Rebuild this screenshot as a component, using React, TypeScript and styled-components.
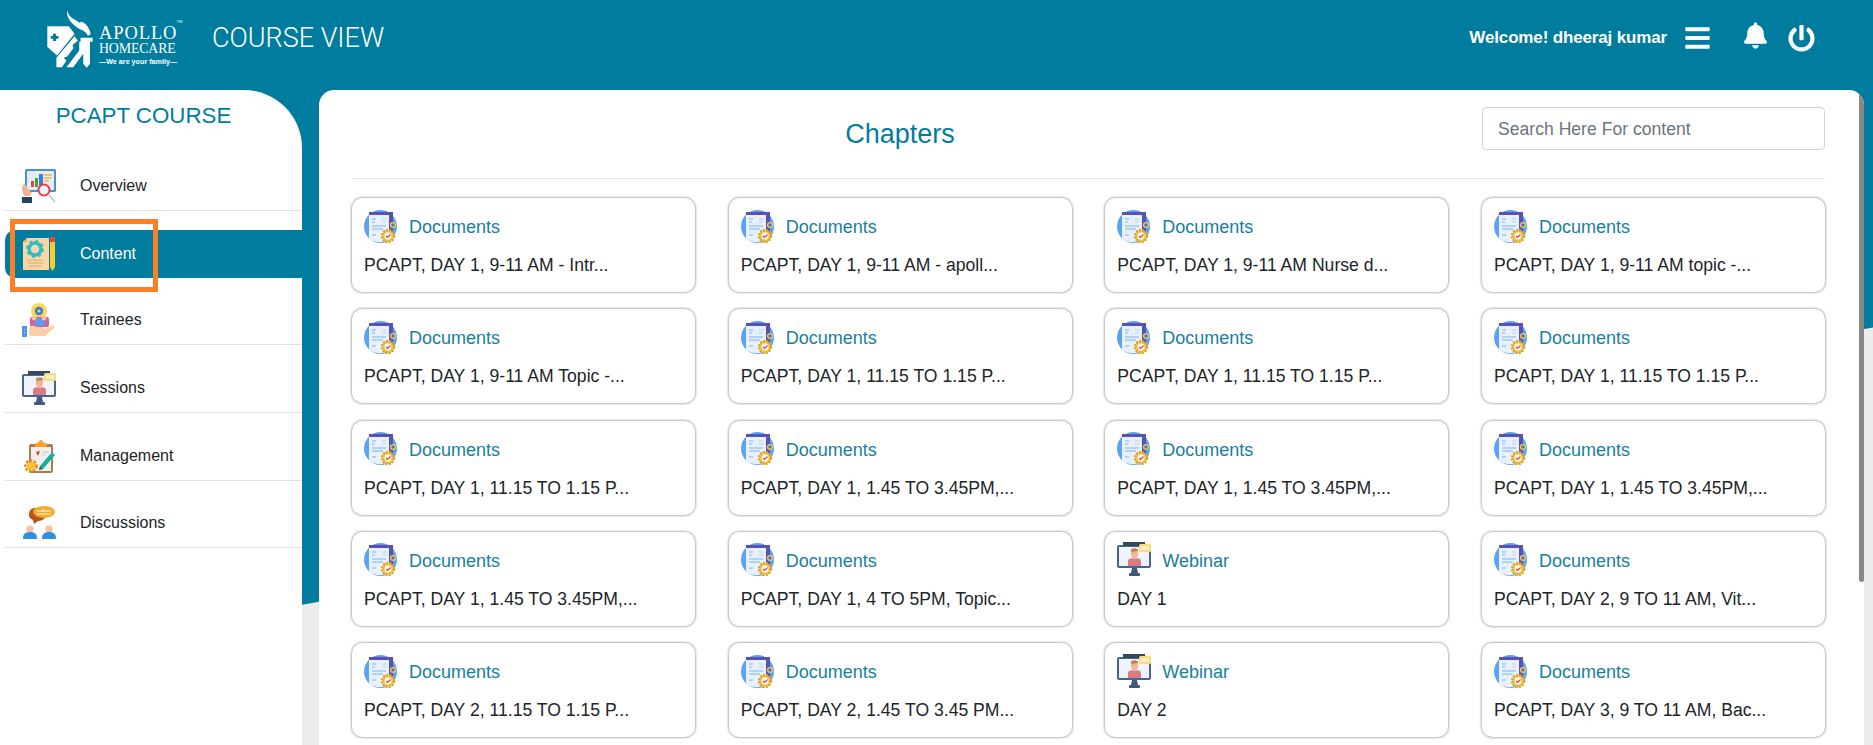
import styled, { createGlobalStyle } from "styled-components";
import { FaBars, FaBell, FaPowerOff } from "react-icons/fa";

const TEAL = "#007c9e";

const GlobalStyle = createGlobalStyle`
  html, body {
    margin: 0;
    height: 100%;
  }
  * {
    box-sizing: border-box;
  }
  body {
    font-family: "Liberation Sans", Arial, sans-serif;
    color: #212529;
  }
`;

const Page = styled.div`
  position: relative;
  height: 100vh;
  overflow: hidden;
  background: #ececec;
  display: flex;
  flex-direction: column;

  &::before {
    content: "";
    position: absolute;
    inset: 0;
    background: ${TEAL};
    clip-path: polygon(0 0, 100% 0, 100% 327.5px, 0 658px);
  }
`;

const TopBar = styled.header`
  position: relative;
  flex: none;
  height: 90px;
  display: flex;
  align-items: center;
  color: #fff;
  padding: 0 58px 0 47px;
`;

const Logo = styled.div`
  display: flex;
  align-items: flex-start;
  gap: 5px;
  width: 165px;
  margin-top: -12px;
`;

const LogoWords = styled.div`
  position: relative;
  display: flex;
  flex-direction: column;
  align-items: flex-start;
  padding-top: 15px;
  font-family: "Liberation Serif", serif;
  white-space: nowrap;
`;

const LogoName = styled.span`
  font-size: 18.5px;
  line-height: 17px;
  letter-spacing: 0.9px;
`;

const LogoSub = styled.span`
  font-size: 13.8px;
  line-height: 14px;
  letter-spacing: -0.1px;
`;

const LogoTag = styled.span`
  font-family: "Liberation Sans", sans-serif;
  font-size: 7.2px;
  line-height: 11px;
  font-weight: 700;
`;

const LogoTm = styled.span`
  position: absolute;
  top: 9px;
  right: -5px;
  font-family: "Liberation Sans", sans-serif;
  font-size: 4px;
`;

const PageTitle = styled.div`
  font-family: Roboto, sans-serif;
  font-weight: 300;
  font-size: 27px;
  margin-top: -14px;
`;

const UserArea = styled.div`
  margin-left: auto;
  display: flex;
  align-items: center;
  margin-top: -14px;
`;

const Welcome = styled.span`
  font-size: 17px;
  font-weight: 700;
  letter-spacing: -0.15px;
  margin-right: 18px;
`;

const BarIcon = styled(FaBars)`
  font-size: 25px;
  width: 25px;
  height: 28px;
  margin-right: 34px;
`;

const BellIcon = styled(FaBell)`
  width: 23px;
  height: 27px;
  margin: -6px 21px 0 0;
`;

const PowerIcon = styled(FaPowerOff)`
  width: 27px;
  height: 27px;
  margin-top: 1px;
`;

const Body = styled.div`
  position: relative;
  flex: 1;
  min-height: 0;
  display: flex;
`;

const Sidebar = styled.aside`
  flex: none;
  width: 302px;
  background: #fff;
  border-top-right-radius: 58px;
`;

const CourseName = styled.div`
  color: ${TEAL};
  font-size: 22.3px;
  line-height: 25px;
  text-align: center;
  padding: 13px 15px 0 0;
  height: 53px;
`;

const NavItem = styled.div<{ $active?: boolean }>`
  height: ${(p) => (p.$active ? "48px" : "67.7px")};
  margin: ${(p) => (p.$active ? "19px" : "0")} 0 0 5px;
  padding: 0 0 6px 17px;
  display: flex;
  align-items: flex-end;
  gap: 24px;
  font-size: 16px;
  background: ${(p) => (p.$active ? TEAL : "transparent")};
  color: ${(p) => (p.$active ? "#fff" : "#212529")};
  border-radius: ${(p) => (p.$active ? "10px 0 0 10px" : "0")};
  border-bottom: ${(p) => (p.$active ? "0" : "1px solid #e3dde2")};
`;

const NavLabel = styled.span`
  line-height: 33px;
  padding-bottom: 2px;
`;

const Highlight = styled.div`
  position: absolute;
  left: 10px;
  top: 129px;
  width: 148px;
  height: 73px;
  border: 5px solid #ff7f27;
`;

const Main = styled.main`
  position: relative;
  flex: none;
  width: 1545px;
  margin-left: 17px;
  background: #fff;
  border-radius: 15px 15px 0 0;
  overflow: hidden;
  padding: 17px 39px 0 33px;
`;

const ScrollThumb = styled.div`
  position: absolute;
  top: 0;
  right: 0;
  width: 5px;
  height: 492px;
  background: #888;
  border-radius: 0 0 3px 3px;
`;

const TitleRow = styled.div`
  display: grid;
  grid-template-columns: 1fr 343px;
  gap: 32px;
  align-items: center;
  padding-bottom: 28px;
  border-bottom: 1px solid #e4e4e4;
`;

const Chapters = styled.h2`
  margin: 0 2px 0 0;
  color: ${TEAL};
  font-size: 27px;
  font-weight: 400;
  text-align: center;
  padding-top: 12px;
`;

const SearchInput = styled.input`
  width: 100%;
  height: 43px;
  padding: 1px 15px 0;
  border: 1px solid #ced4da;
  border-radius: 4px;
  font-family: inherit;
  font-size: 17.6px;
  outline: none;

  &::placeholder {
    color: #6c757d;
    opacity: 1;
  }
`;

const CardGrid = styled.div`
  display: grid;
  grid-template-columns: repeat(4, 343px);
  justify-content: space-between;
  row-gap: 17.3px;
  margin-top: 19px;
`;

const Card = styled.div`
  height: 94px;
  padding: 11px 12px;
  background: #fff;
  border-radius: 10px;
  box-shadow: 0 0 3px rgba(0, 0, 0, 0.6);
`;

const CardHead = styled.div`
  display: flex;
  align-items: center;
  gap: 11px;
  height: 34px;
`;

const CardKind = styled.span`
  color: #18809f;
  font-size: 18px;
  padding-top: 3px;
`;

const CardName = styled.div`
  margin-top: 12px;
  font-size: 17.6px;
  line-height: 20px;
  white-space: nowrap;
`;

const Pic = styled.svg`
  flex: none;
  width: 34px;
  height: 35px;
  display: block;
`;

const LogoMark = () => (
  <svg width="47" height="58" viewBox="140 30 140 172" fill="#fff">
    <path d="M141 78H205L222 100L170 165L141 140Z" />
    <path fill={TEAL} d="M158 100h9v7h7v8h-7v7h-9v-7h-7v-8h7z" />
    <path d="M168 200V172L222 108L232 121L216 134L219 143L200 168L190 172L198 181L184 200Z" />
    <path d="M198 200L236 150V124H240V112H276V124H268V190L258 202L248 190V160L218 200Z" />
    <path d="M200 30C205 55 228 58 240 70C232 56 266 68 270 102L262 106C254 88 232 88 218 72C206 60 198 48 200 30Z" />
  </svg>
);

const OverviewPic = () => (
  <Pic viewBox="0 0 34 35">
    <rect x="3" y="0" width="31" height="23" rx="1.5" fill="#4f8fd0" />
    <rect x="5" y="2" width="27" height="19" fill="#e3eefb" />
    <rect x="9" y="12" width="3" height="6" fill="#ef4136" />
    <rect x="13" y="9" width="3" height="9" fill="#43a047" />
    <rect x="17" y="5" width="4" height="13" fill="#3c7fd0" />
    <path d="M22 6h8M22 9h8M22 12h5" stroke="#f4b63f" strokeWidth="1.3" />
    <path d="M0 20c0-4 2-5 3-5l3 5 4 4-2 3H2z" fill="#f5b28f" />
    <rect x="0" y="28" width="10" height="6" fill="#24425f" />
    <circle cx="22" cy="21" r="5.5" fill="#f3f7fb" stroke="#ee3e3e" strokeWidth="2" />
    <path d="M27 26l6 7" stroke="#a9c9e8" strokeWidth="1.6" />
  </Pic>
);

const ContentPic = () => (
  <Pic viewBox="0 0 34 35">
    <path d="M5 1h22v32H1V5z" fill="#f8d7a4" />
    <path d="M5 1v4H1z" fill="#e7b06c" />
    <circle cx="13" cy="12" r="6" fill="none" stroke="#2ebcc6" strokeWidth="3.4" />
    <circle cx="13" cy="12" r="8" fill="none" stroke="#2ebcc6" strokeWidth="2" strokeDasharray="3 3.3" />
    <path d="M5 23h16M6 26h15M7 29h13" stroke="#d9a873" strokeWidth="1" />
    <rect x="28" y="0" width="5" height="5" fill="#f0433e" />
    <path d="M28 5h5v25l-2.5 4-2.5-4z" fill="#f8cc2e" />
  </Pic>
);

const TraineesPic = () => (
  <Pic viewBox="0 0 34 35">
    <circle cx="17" cy="8" r="8" fill="#f7dc52" />
    <circle cx="17" cy="8" r="4.2" fill="#3d7bd8" />
    <circle cx="17" cy="8" r="1.5" fill="#f7dc52" />
    <rect x="8" y="14" width="19" height="10" rx="2" fill="#d75f96" />
    <rect x="13" y="15" width="10" height="8" rx="2" fill="#5b9bf0" />
    <circle cx="12" cy="15" r="2.4" fill="#f7c29b" />
    <circle cx="22" cy="15" r="2.4" fill="#f7c29b" />
    <path d="M7 24c3-2 5-1 8 0h6l1 2 7-3c2-1 4 0 4 1L23 33H10l-3-1z" fill="#fbd0a7" />
    <rect x="0" y="23" width="5" height="11" fill="#4d94ef" />
    <path d="M2.5 26v1M2.5 29v1" stroke="#f7dc52" />
  </Pic>
);

const SessionPic = () => (
  <Pic viewBox="0 0 34 35">
    <rect x="0" y="3" width="34" height="23" rx="2" fill="#47658a" />
    <rect x="6" y="0" width="22" height="4" fill="#33475f" />
    <rect x="2" y="5" width="30" height="19" fill="#eef3fc" />
    <path d="M11 24v-5c0-2 2-3 6.5-3s6.5 1 6.5 3v5z" fill="#d77b85" />
    <rect x="15" y="12" width="5" height="5" fill="#eeb596" />
    <path d="M14 8c0-2 7-2 7 0v5c0 2-7 2-7 0z" fill="#eeb596" />
    <path d="M14 10V8c0-2 7-2 7 0v1z" fill="#c48350" />
    <rect x="22" y="2" width="12" height="8" rx="1.5" fill="#f8dc7d" />
    <path d="M24 5h8M24 7h8" stroke="#fff" />
    <path d="M15 26h5l1 5h-7z" fill="#3f5a7d" />
    <rect x="12" y="31" width="11" height="3" rx="1" fill="#3f5a7d" />
  </Pic>
);

const ManagementPic = () => (
  <Pic viewBox="0 0 34 35">
    <rect x="7" y="5" width="24" height="29" rx="2" fill="#ad7a52" />
    <rect x="9" y="8" width="20" height="24" fill="#f2f0ee" />
    <path d="M13 5c0-1 3-1 4-2 1-3 3-3 4 0 1 1 4 1 4 2v3H13z" fill="#ffa126" />
    <path d="M14 13l4-1-2 5z" fill="#e2372f" />
    <path d="M21 13h6M20 16h3" stroke="#c3c3c3" />
    <path d="M18 27L30 13l3 3-12 14-4 1z" fill="#17b1a0" />
    <path d="M17 31l1-4 3 3z" fill="#555" />
    <circle cx="9" cy="27" r="4" fill="#f8c235" />
    <circle cx="9" cy="27" r="5.5" fill="none" stroke="#f2861d" strokeWidth="2.6" strokeDasharray="2.5 1.5" />
  </Pic>
);

const DiscussionPic = () => (
  <Pic viewBox="0 0 34 35">
    <path d="M13 2C8 2 7 6 7 9c0 3 2 4 4 5l1 4 4-3c6 0 8-4 8-7s-4-6-11-6z" fill="#b4521f" />
    <ellipse cx="22" cy="6" rx="11" ry="6" fill="#f9a826" />
    <path d="M15 5h14M15 8h14M21 2.5v3" stroke="#fff" strokeWidth="1" />
    <circle cx="8" cy="23" r="3.6" fill="#f9c0a5" />
    <circle cx="27" cy="23" r="3.6" fill="#f9c0a5" />
    <path d="M1 33c0-5 2-7 7-7s7 2 7 7z" fill="#2f8fe0" />
    <path d="M20 33c0-5 2-7 7-7s7 2 7 7z" fill="#2f8fe0" />
  </Pic>
);

const DocumentPic = () => (
  <Pic viewBox="0 0 34 35">
    <circle cx="16.5" cy="17.5" r="16.5" fill="#5aa3f4" />
    <path d="M5 3h24v24H5z" fill="#5b51b5" />
    <path d="M5 6h20v25c-6 3-14 3-20-1z" fill="#e7f1fd" />
    <path d="M8 10h4M8 13h3M8 17h14M8 20h11M8 26h4" stroke="#7fb2ea" strokeWidth="1.1" />
    <path d="M18 10h4M18 13h4" stroke="#b6d4f3" strokeWidth="1.1" />
    <circle cx="29" cy="16" r="2.4" fill="#4f6fd0" stroke="#f5d23d" strokeWidth="1.3" />
    <circle cx="24" cy="27" r="6" fill="#f2c744" stroke="#d9a429" strokeWidth="2.4" strokeDasharray="2 1.2" />
    <circle cx="24" cy="27" r="3.4" fill="#fff" />
    <path d="M22 27l1.5 1.5 3-3" fill="none" stroke="#e23b3b" strokeWidth="1.2" />
  </Pic>
);

interface INavEntry {
  label: string;
  pic: React.ReactNode;
  active?: boolean;
}

const navEntries: INavEntry[] = [
  { label: "Overview", pic: <OverviewPic /> },
  { label: "Content", pic: <ContentPic />, active: true },
  { label: "Trainees", pic: <TraineesPic /> },
  { label: "Sessions", pic: <SessionPic /> },
  { label: "Management", pic: <ManagementPic /> },
  { label: "Discussions", pic: <DiscussionPic /> },
];

const chapters: string[] = [
  "PCAPT, DAY 1, 9-11 AM - Intr...",
  "PCAPT, DAY 1, 9-11 AM - apoll...",
  "PCAPT, DAY 1, 9-11 AM Nurse d...",
  "PCAPT, DAY 1, 9-11 AM topic -...",
  "PCAPT, DAY 1, 9-11 AM Topic -...",
  "PCAPT, DAY 1, 11.15 TO 1.15 P...",
  "PCAPT, DAY 1, 11.15 TO 1.15 P...",
  "PCAPT, DAY 1, 11.15 TO 1.15 P...",
  "PCAPT, DAY 1, 11.15 TO 1.15 P...",
  "PCAPT, DAY 1, 1.45 TO 3.45PM,...",
  "PCAPT, DAY 1, 1.45 TO 3.45PM,...",
  "PCAPT, DAY 1, 1.45 TO 3.45PM,...",
  "PCAPT, DAY 1, 1.45 TO 3.45PM,...",
  "PCAPT, DAY 1, 4 TO 5PM, Topic...",
  "DAY 1",
  "PCAPT, DAY 2, 9 TO 11 AM, Vit...",
  "PCAPT, DAY 2, 11.15 TO 1.15 P...",
  "PCAPT, DAY 2, 1.45 TO 3.45 PM...",
  "DAY 2",
  "PCAPT, DAY 3, 9 TO 11 AM, Bac...",
];

export default function App() {
  return (
    <Page>
      <GlobalStyle />
      <TopBar>
        <Logo>
          <LogoMark />
          <LogoWords>
            <LogoName>APOLLO</LogoName>
            <LogoSub>HOMECARE</LogoSub>
            <LogoTag>—We are your family—</LogoTag>
            <LogoTm>TM</LogoTm>
          </LogoWords>
        </Logo>
        <PageTitle>COURSE VIEW</PageTitle>
        <UserArea>
          <Welcome>Welcome! dheeraj kumar</Welcome>
          <BarIcon />
          <BellIcon />
          <PowerIcon />
        </UserArea>
      </TopBar>
      <Body>
        <Sidebar>
          <CourseName>PCAPT COURSE</CourseName>
          {navEntries.map((entry) => (
            <NavItem key={entry.label} $active={entry.active}>
              {entry.pic}
              <NavLabel>{entry.label}</NavLabel>
            </NavItem>
          ))}
        </Sidebar>
        <Main>
          <TitleRow>
            <Chapters>Chapters</Chapters>
            <SearchInput placeholder="Search Here For content" />
          </TitleRow>
          <CardGrid>
            {chapters.map((name, i) => {
              const isWebinar = name.startsWith("DAY");
              return (
                <Card key={i}>
                  <CardHead>
                    {isWebinar ? <SessionPic /> : <DocumentPic />}
                    <CardKind>{isWebinar ? "Webinar" : "Documents"}</CardKind>
                  </CardHead>
                  <CardName>{name}</CardName>
                </Card>
              );
            })}
          </CardGrid>
          <ScrollThumb />
        </Main>
        <Highlight />
      </Body>
    </Page>
  );
}
